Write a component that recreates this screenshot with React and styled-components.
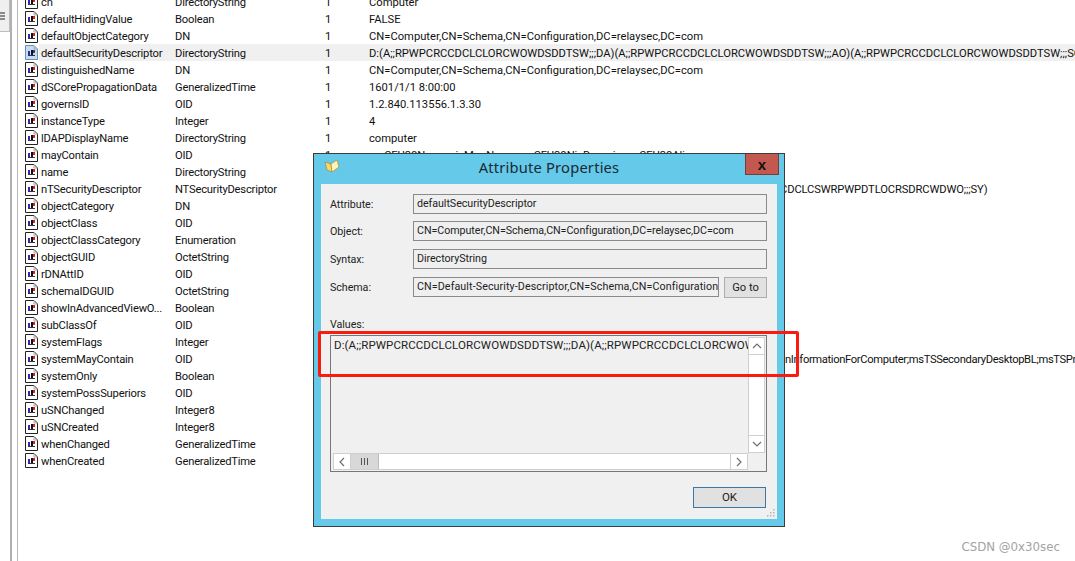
import React from "react";
import styled, { createGlobalStyle } from "styled-components";

const Global = createGlobalStyle`
  html, body { margin: 0; padding: 0; background: #fff; height: 100%; overflow: hidden; }
  #root { height: 561px; }
`;

const Page = styled.div`
  position: relative;
  width: 1075px;
  height: 561px;
  overflow: hidden;
  display: flex;
  background: #fff;
  font-family: Roboto, "Liberation Sans", sans-serif;
  font-size: 11.2px;
  color: #111;
`;

const Sidebar = styled.div`
  flex: 0 0 10px;
  height: 561px;
  background: #fff;
  border-right: 2px solid #b0b0b0;
`;
const Grip = styled.div`
  width: 9px;
  height: 31px;
  background: #efefef;
  border-bottom: 1px solid #bdbdbd;
  border-right: 1px solid #bdbdbd;
  display: flex;
  flex-direction: column;
  justify-content: center;
  gap: 1px;
  padding-top: 5px;
  margin-top: -5px;
  i { display: block; width: 5px; height: 2px; background: #8a8a8a; }
`;
const Gutter = styled.div`
  flex: 0 0 5px;
  background: #fff;
  border-right: 1px solid #b8b8b8;
`;

const List = styled.div`
  flex: 1;
  margin-top: -7px;
  min-width: 0;
`;
const Row = styled.div`
  display: grid;
  grid-template-columns: 150px 150px 44px 1fr;
  height: 17px;
  line-height: 19px;
  padding-left: 7px;
  white-space: nowrap;
  background: ${(p) => (p.$selected ? "linear-gradient(90deg,#fff 21px,#f0f0f0 21px)" : "none")};
`;
const NameCell = styled.div`
  display: flex;
  align-items: flex-start;
  gap: 3px;
  letter-spacing: -0.2px;
`;
const TypeCell = styled.div`
  letter-spacing: -0.2px;
`;
const CountCell = styled.div``;
const ValueCell = styled.div`
  overflow: visible;
`;
const DocGlyph = styled.svg`
  flex: 0 0 13px;
  margin-top: 1px;
`;

function DocIcon({ selected }) {
  return (
    <DocGlyph width="13" height="15" viewBox="0 0 13 15">
      <path d="M.5.500h8.500l3.500 3.500v10.500H.5z" fill={selected ? "#c5dcf2" : "#fff"} stroke={selected ? "#6b8fb5" : "#222"} />
      <path d="M9 .500v3.500h3.500" fill="none" stroke="#aaa" />
      <rect x="3" y="6" width="2" height="4" fill="#2a2ac0" />
      <rect x="5" y="6" width="1" height="4" fill={selected ? "#c5dcf2" : "#fff"} />
      <rect x="6" y="5" width="2" height="5" fill="#111" />
      <rect x="8" y="5" width="2" height="3" fill={selected ? "#3a3a7a" : "#d82020"} />
      <rect x="3" y="10" width="7" height="1" fill="#333" />
    </DocGlyph>
  );
}

const rows = [
  ["cn", "DirectoryString", "Computer"],
  ["defaultHidingValue", "Boolean", "FALSE"],
  ["defaultObjectCategory", "DN", "CN=Computer,CN=Schema,CN=Configuration,DC=relaysec,DC=com"],
  ["defaultSecurityDescriptor", "DirectoryString", "D:(A;;RPWPCRCCDCLCLORCWOWDSDDTSW;;;DA)(A;;RPWPCRCCDCLCLORCWOWDSDDTSW;;;AO)(A;;RPWPCRCCDCLCLORCWOWDSDDTSW;;;SO)"],
  ["distinguishedName", "DN", "CN=Computer,CN=Schema,CN=Configuration,DC=relaysec,DC=com"],
  ["dSCorePropagationData", "GeneralizedTime", "1601/1/1 8:00:00"],
  ["governsID", "OID", "1.2.840.113556.1.3.30"],
  ["instanceType", "Integer", "4"],
  ["lDAPDisplayName", "DirectoryString", "computer"],
  ["mayContain", "OID", "msSFU30Name;nisMapName;msSFU30NisDomain;msSFU30Aliases"],
  ["name", "DirectoryString", ""],
  ["nTSecurityDescriptor", "NTSecurityDescriptor", ""],
  ["objectCategory", "DN", ""],
  ["objectClass", "OID", ""],
  ["objectClassCategory", "Enumeration", ""],
  ["objectGUID", "OctetString", ""],
  ["rDNAttID", "OID", ""],
  ["schemaIDGUID", "OctetString", ""],
  ["showInAdvancedViewO...", "Boolean", ""],
  ["subClassOf", "OID", ""],
  ["systemFlags", "Integer", ""],
  ["systemMayContain", "OID", ""],
  ["systemOnly", "Boolean", ""],
  ["systemPossSuperiors", "OID", ""],
  ["uSNChanged", "Integer8", ""],
  ["uSNCreated", "Integer8", ""],
  ["whenChanged", "GeneralizedTime", ""],
  ["whenCreated", "GeneralizedTime", ""],
];

const Overflow = styled.div`
  position: absolute;
  left: 785px;
  top: ${(p) => p.$y}px;
  line-height: 17px;
  width: ${(p) => p.$w}px;
  overflow: hidden;
  white-space: nowrap;
  text-indent: ${(p) => p.$indent}px;
  letter-spacing: ${(p) => p.$track}px;
`;

const Dialog = styled.div`
  position: absolute;
  left: 313px;
  top: 153px;
  width: 472px;
  height: 374px;
  box-sizing: border-box;
  background: #65c9ea;
  border: 1px solid #3c3c3c;
  display: flex;
  flex-direction: column;
  padding: 0 7px 7px;
  font-size: 10.7px;
  letter-spacing: -0.05px;
`;
const TitleBar = styled.div`
  position: relative;
  height: 30px;
  flex: 0 0 30px;
  display: flex;
  align-items: center;
  justify-content: center;
`;
const Title = styled.div`
  font-family: "Noto Sans", sans-serif;
  font-size: 14.7px;
  color: #1a2a33;
  letter-spacing: 0.2px;
  margin-top: -4px;
`;
const BookIcon = styled.svg`
  position: absolute;
  left: 3px;
  top: 5px;
`;
const CloseBtn = styled.div`
  position: absolute;
  right: -2px;
  top: 0;
  width: 34px;
  height: 21px;
  box-sizing: border-box;
  background: #c2584f;
  border: 1px solid #7a3a36;
  border-top: 0;
  display: flex;
  align-items: center;
  justify-content: center;
  font: bold 15px "Liberation Sans", sans-serif;
  color: #111;
`;
const Body = styled.div`
  flex: 1;
  background: #f0f0f0;
  padding: 10px 10px 0 9px;
  position: relative;
  display: flex;
  flex-direction: column;
`;
const Field = styled.div`
  display: flex;
  align-items: center;
  height: 20px;
  margin-bottom: ${(p) => p.$gap}px;
`;
const Label = styled.div`
  flex: 0 0 83px;
  color: #222;
`;
const Input = styled.div`
  flex: 1;
  min-width: 0;
  height: 20px;
  box-sizing: border-box;
  border: 1px solid #8a8a8a;
  background: #efefef;
  line-height: 18px;
  padding-left: 3px;
  white-space: nowrap;
  overflow: hidden;
  color: #222;
  letter-spacing: ${(p) => p.$track || -0.05}px;
`;
const GoTo = styled.div`
  flex: 0 0 43px;
  height: 21px;
  margin-left: 5px;
  box-sizing: border-box;
  border: 1px solid #adadad;
  background: #e1e1e1;
  line-height: 19px;
  text-align: center;
  color: #222;
  font-size: 11.2px;
`;
const ValuesLabel = styled.div`
  margin-top: 13px;
  line-height: 14px;
  color: #222;
`;
const ValuesBox = styled.div`
  margin-top: 3px;
  height: 137px;
  box-sizing: border-box;
  border: 1px solid #777;
  display: grid;
  grid-template-columns: minmax(0, 1fr) 17px;
  grid-template-rows: minmax(0, 1fr) 17px;
  padding: 1px;
  background: #f0f0f0;
`;
const ValuesText = styled.div`
  padding: 1px 0 0 2px;
  font-size: 11.5px;
  line-height: 15px;
  white-space: nowrap;
  overflow: hidden;
  color: #222;
  letter-spacing: 0.1px;
`;
const VScroll = styled.div`
  grid-row: 1;
  grid-column: 2;
  display: flex;
  flex-direction: column;
  background: #fff;
  border: 1px solid #cfcfcf;
`;
const HScroll = styled.div`
  grid-row: 2;
  grid-column: 1;
  display: flex;
  background: #fff;
  border: 1px solid #cfcfcf;
  margin-left: 1px;
`;
const Arrow = styled.div`
  flex: 0 0 16px;
  display: flex;
  align-items: center;
  justify-content: center;
  background: #fff;
  border-${(p) => p.$side}: 1px solid #cfcfcf;
`;
const Track = styled.div`
  flex: 1;
`;
const Thumb = styled.div`
  flex: 0 0 27px;
  background: #d8d8d8;
  border-right: 1px solid #bbb;
  display: flex;
  align-items: center;
  justify-content: center;
  gap: 1px;
  i { display: block; width: 1px; height: 7px; background: #555; margin: 0 .5px; }
`;
const Footer = styled.div`
  display: flex;
  justify-content: flex-end;
  margin-top: 15px;
`;
const OkBtn = styled.div`
  width: 73px;
  height: 21px;
  box-sizing: border-box;
  border: 1px solid #3a78a8;
  background: #e1e1e1;
  text-align: center;
  line-height: 19px;
  color: #222;
  font-size: 11.5px;
  margin-right: 1px;
`;
const ResizeGrip = styled.svg`
  position: absolute;
  right: 1px;
  bottom: 1px;
`;
const Highlight = styled.div`
  position: absolute;
  left: 318px;
  top: 331px;
  width: 481px;
  height: 46px;
  box-sizing: border-box;
  border: 3px solid #fb1a0e;
  border-radius: 2px;
  pointer-events: none;
`;
const Watermark = styled.div`
  position: absolute;
  right: 15px;
  bottom: 7px;
  font: 11.8px "DejaVu Sans", sans-serif;
  color: #a3a3a3;
`;

const Chev = ({ d }) => (
  <svg width="10" height="10" viewBox="0 0 10 10">
    <path d={d} fill="none" stroke="#707070" strokeWidth="1.2" />
  </svg>
);

export default function App() {
  return (
    <Page>
      <Global />
      <Sidebar>
        <Grip><i /><i /><i /></Grip>
      </Sidebar>
      <Gutter />
      <List>
        {rows.map((r) => {
          const sel = r[0] === "defaultSecurityDescriptor";
          return (
            <Row key={r[0]} $selected={sel}>
              <NameCell>
                <DocIcon selected={sel} />
                {r[0]}
              </NameCell>
              <TypeCell>{r[1]}</TypeCell>
              <CountCell>1</CountCell>
              <ValueCell>{r[2]}</ValueCell>
            </Row>
          );
        })}
      </List>
      <Overflow $y={181} $w={220} $indent={-5} $track={-0.12}>CDCLCSWRPWPDTLOCRSDRCWDWO;;;SY)</Overflow>
      <Overflow $y={351} $w={290} $indent={0} $track={-0.35}>nInformationForComputer;msTSSecondaryDesktopBL;msTSPrimaryDesktopBL</Overflow>
      <Dialog>
        <TitleBar>
          <BookIcon width="16" height="14" viewBox="0 0 16 14">
            <path d="M1 3 L7 5 L8 13 L3 11 Z" fill="#f3d874" stroke="#a88a30" strokeWidth=".7" />
            <path d="M7 5 L13 1 L15 8 L8 13 Z" fill="#fff3b8" stroke="#a88a30" strokeWidth=".7" />
          </BookIcon>
          <Title>Attribute Properties</Title>
          <CloseBtn>x</CloseBtn>
        </TitleBar>
        <Body>
          <Field $gap={7}><Label>Attribute:</Label><Input>defaultSecurityDescriptor</Input></Field>
          <Field $gap={8}><Label>Object:</Label><Input>CN=Computer,CN=Schema,CN=Configuration,DC=relaysec,DC=com</Input></Field>
          <Field $gap={8}><Label>Syntax:</Label><Input>DirectoryString</Input></Field>
          <Field $gap={8}><Label>Schema:</Label><Input $track={0.1}>CN=Default-Security-Descriptor,CN=Schema,CN=Configuration,DC=relaysec,DC=com</Input><GoTo>Go to</GoTo></Field>
          <ValuesLabel>Values:</ValuesLabel>
          <ValuesBox>
            <ValuesText>D:(A;;RPWPCRCCDCLCLORCWOWDSDDTSW;;;DA)(A;;RPWPCRCCDCLCLORCWOWDSDDTSW;;;AO)</ValuesText>
            <VScroll>
              <Arrow $side="bottom"><Chev d="M1 7 L5 3 L9 7" /></Arrow>
              <Track />
              <Arrow $side="top"><Chev d="M1 3 L5 7 L9 3" /></Arrow>
            </VScroll>
            <HScroll>
              <Arrow $side="right"><Chev d="M7 1 L3 5 L7 9" /></Arrow>
              <Thumb><i /><i /><i /></Thumb>
              <Track />
              <Arrow $side="left"><Chev d="M3 1 L7 5 L3 9" /></Arrow>
            </HScroll>
          </ValuesBox>
          <Footer><OkBtn>OK</OkBtn></Footer>
          <ResizeGrip width="10" height="10" viewBox="0 0 10 10">
            <g fill="#b5b5b5">
              <rect x="7" y="1" width="1.5" height="1.5" />
              <rect x="4" y="4" width="1.5" height="1.5" />
              <rect x="7" y="4" width="1.5" height="1.5" />
              <rect x="1" y="7" width="1.5" height="1.5" />
              <rect x="4" y="7" width="1.5" height="1.5" />
              <rect x="7" y="7" width="1.5" height="1.5" />
            </g>
          </ResizeGrip>
        </Body>
      </Dialog>
      <Highlight />
      <Watermark>CSDN @0x30sec</Watermark>
    </Page>
  );
}
